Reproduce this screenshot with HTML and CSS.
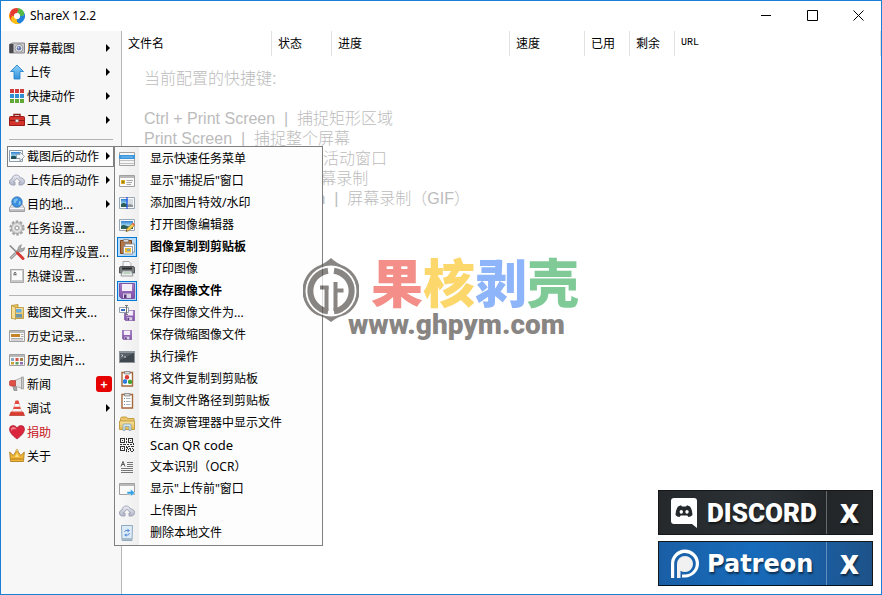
FILE: index.html
```html
<!DOCTYPE html>
<html lang="zh-CN">
<head>
<meta charset="utf-8">
<title>ShareX 12.2</title>
<link rel="stylesheet" href="styles.css">
</head>
<body>
<svg class="defs" aria-hidden="true">
  <defs>
    <linearGradient id="blueUp" x1="0" y1="0" x2="0" y2="1"><stop offset="0" stop-color="#8fd3fa"/><stop offset="1" stop-color="#2f8fdc"/></linearGradient>
    <linearGradient id="greyUp" x1="0" y1="0" x2="0" y2="1"><stop offset="0" stop-color="#f4f4f6"/><stop offset="1" stop-color="#b4b4b8"/></linearGradient>
    <linearGradient id="cloudFill" x1="0" y1="0" x2="0" y2="1"><stop offset="0" stop-color="#eceef5"/><stop offset="1" stop-color="#b0b5c8"/></linearGradient>
    <linearGradient id="sky" x1="0" y1="0" x2="0" y2="1"><stop offset="0" stop-color="#2f7fd0"/><stop offset=".6" stop-color="#a8dcf0"/><stop offset="1" stop-color="#3f7a4c"/></linearGradient>
    <linearGradient id="folderFill" x1="0" y1="0" x2="0" y2="1"><stop offset="0" stop-color="#f8e2a0"/><stop offset="1" stop-color="#e2b84e"/></linearGradient>
    <linearGradient id="lilac" x1="0" y1="0" x2="0" y2="1"><stop offset="0" stop-color="#a97bc8"/><stop offset="1" stop-color="#7d4fa6"/></linearGradient>
    <symbol id="cloud" viewBox="0 0 16 16"><path d="M3.500 13C1.500 13 .5 11.700.5 10 .5 8.300 1.500 7.200 3 7 3.200 4.500 5 3 7.200 3c2 0 3.500 1 4 2.900 2.500-.2 4.300 1.300 4.300 3.600 0 2-1.300 3.500-3.300 3.500H10V10h1.700L8 6.200 4.300 10H6v3z" fill="url(#cloudFill)" stroke="#9a9eb0" stroke-width=".9"/></symbol>
    <symbol id="photo" viewBox="0 0 16 16"><path d="M.5 2.500h15v11H.5z" fill="#f6f8fa" stroke="#9aa7b4"/><path d="M2 4h12v8H2z" fill="url(#sky)"/><path d="M2 9c3-3 5 1 12 1v2H2z" fill="#2c5f58"/></symbol>
    <symbol id="floppy" viewBox="0 0 16 16"><path d="M.5.500h15v15h-13l-2-2z" fill="url(#lilac)" stroke="#7d55a2"/><path d="M3 1h10v7H3z" fill="#f3eef8"/><path d="M4 10.500h8V15H4z" fill="#d8cfe2"/><path d="M5 11.500h2.500V15H5z" fill="#5b3780"/></symbol>
    <symbol id="clipboard" viewBox="0 0 16 16"><path d="M3 1.500h10.500v13.500H3z" fill="#fff" stroke="#a5683d" stroke-width="1.400"/><path d="M5.500.500h5.500v2.500H5.500z" fill="#d9d9d9" stroke="#777" stroke-width=".7"/></symbol>
    <symbol id="window" viewBox="0 0 16 16"><path d="M.5 2.500h15v11H.5z" fill="#fafafa" stroke="#a0a0a0"/><path d="M1 3h14v2H1z" fill="#b8b8b8"/></symbol>
  </defs>
</svg>

<div class="window">
  <header class="titlebar">
    <svg class="app-logo" viewBox="0 0 16 16" aria-hidden="true">
      <path d="M8 0A8 8 0 0 0 1 4.200C1.300 7.500 3.300 9 5 8.500 4.200 5.500 6 3 9.500 4 11 2.500 10.500.7 8 0" fill="#e63a2e"/>
      <path d="M8 0a8 8 0 0 1 7.200 4.500C15.800 8 13.500 9.300 11.400 8 11.700 5.800 10.500 4.200 8.500 3.900 9.800 2.700 9.600 1 8 0" fill="#55b947"/>
      <path d="M15.300 4.700A8 8 0 0 1 11.500 15.200C8.500 16 7 14 7.500 11.800 10 12 11.700 10.500 12 8.200 14 8.500 15.400 7 15.300 4.700" fill="#2280dc"/>
      <path d="M11.300 15.300A8 8 0 0 1 .8 4.600C.9 7 2.700 8.800 4.500 8.500 4.500 10.500 6 11.800 7.900 11.900 7.600 14 9 15.400 11.300 15.300" fill="#fbbd16"/>
      <path d="M1 4.300C0 8 1 11 3 14 1.500 10 2 8 4 8.600 2.500 8 1.400 6.500 1 4.300" fill="#e63a2e"/>
      <circle cx="8" cy="8" r="4" fill="none" stroke="#2280dc" stroke-width="1.800" stroke-dasharray="6.280 18.840"/>
      <circle cx="8" cy="8" r="4" fill="none" stroke="#fbbd16" stroke-width="1.800" stroke-dasharray="6.280 18.840" stroke-dashoffset="-6.280"/>
      <circle cx="8" cy="8" r="4" fill="none" stroke="#e63a2e" stroke-width="1.800" stroke-dasharray="6.280 18.840" stroke-dashoffset="-12.560"/>
      <circle cx="8" cy="8" r="4" fill="none" stroke="#55b947" stroke-width="1.800" stroke-dasharray="6.280 18.840" stroke-dashoffset="-18.840"/>
    </svg>
    <h1 class="title">ShareX 12.2</h1>
    <div class="window-buttons">
      <button class="window-button" aria-label="最小化"><svg viewBox="0 0 11 11"><path d="M0 5.500h10"/></svg></button>
      <button class="window-button" aria-label="最大化"><svg viewBox="0 0 11 11"><path d="M.5.500h10v10H.5z"/></svg></button>
      <button class="window-button" aria-label="关闭"><svg viewBox="0 0 11 11"><path d="M.5.500l10 10M10.500.500l-10 10"/></svg></button>
    </div>
  </header>

  <div class="body">
    <nav class="sidebar">
      <ul class="menu">
        <li><button class="item has-sub">
          <svg class="icon" viewBox="0 0 16 16"><path d="M.5 4.500L3 3h12.500v10H.5z" fill="#c9c9cd" stroke="#88888c"/><path d="M.5 4h4v9h-4z" fill="#4a4a4e"/><circle cx="10" cy="8.300" r="3.900" fill="#eee" stroke="#99999e"/><circle cx="10" cy="8.300" r="2.300" fill="#6479a8"/><circle cx="9.500" cy="7.800" r=".8" fill="#cfe0ff"/></svg>
          屏幕截图</button></li>
        <li><button class="item has-sub">
          <svg class="icon" viewBox="0 0 16 16"><path d="M8 1l6.500 6.500H11V15H5V7.500H1.500z" fill="url(#blueUp)" stroke="#2c86cc" stroke-width=".9"/></svg>
          上传</button></li>
        <li><button class="item has-sub">
          <svg class="icon" viewBox="0 0 16 16"><path d="M1 1h4v4H1zM6 1h4v4H6zM11 1h4v4h-4z" fill="#cf3b3b"/><path d="M1 6h4v4H1zM6 6h4v4H6zM11 6h4v4h-4z" fill="#2f8fd0"/><path d="M1 11h4v4H1zM6 11h4v4H6zM11 11h4v4h-4z" fill="#62a835"/></svg>
          快捷动作</button></li>
        <li><button class="item has-sub">
          <svg class="icon" viewBox="0 0 16 16"><path d="M5 5V2.500h6V5" fill="none" stroke="#8c1c18" stroke-width="1.400"/><path d="M.5 5.500Q.5 4.500 1.500 4.500h13q1 0 1 1V13.500H.5z" fill="#d4332c" stroke="#9b1b16"/><path d="M1 8.500h14" stroke="#8c1612"/><path d="M6.500 7.500h3v2.500h-3z" fill="#eee" stroke="#777" stroke-width=".5"/></svg>
          工具</button></li>
      </ul>
      <hr class="rule">
      <ul class="menu">
        <li class="open"><button class="item has-sub is-open" aria-expanded="true">
          <svg class="icon" viewBox="0 0 16 16"><path d="M.5 2.500h13v11H.5z" fill="#f6f8fa" stroke="#8e9cab"/><path d="M2 4h10v7H2z" fill="url(#sky)"/><path d="M2 8.500c3-2 5 1 10 1V11H2z" fill="#21505a"/><path d="M7.500 6.500H11V4l4.500 4.500L11 13v-2.500H7.500z" fill="#f4f7f9" stroke="#8997a5" stroke-width=".8"/></svg>
          截图后的动作</button>
          <ul class="submenu">
            <li><button class="sub-item"><span class="slot"><svg class="icon" viewBox="0 0 16 16"><path d="M.5 1.500h15v13H.5z" fill="#f6f6f6" stroke="#a2a2a2"/><path d="M0 4h16v4H0z" fill="#3a95dc"/><path d="M2 6h12" stroke="#7cc0f2"/><path d="M1 9.500h14M1 12.500h14" stroke="#c0c0c0"/></svg></span>显示快速任务菜单</button></li>
            <li><button class="sub-item"><span class="slot"><svg class="icon" viewBox="0 0 16 16"><use href="#window"/><path d="M2 7h4v4H2z" fill="#d8ad22"/><path d="M3 8.500h2v1H3z" fill="#6b5310"/><path d="M7.500 7.500H14M7.500 9.500H13M7.500 11.500H12" stroke="#a8a8a8"/></svg></span>显示"捕捉后"窗口</button></li>
            <li><button class="sub-item"><span class="slot"><svg class="icon" viewBox="0 0 16 16"><use href="#photo"/><path d="M8.500 4H14v8H8.500z" fill="#d7dce0"/><path d="M9 10c2-2 3 0 5 0v2H9z" fill="#8d9498"/><path d="M8 2v12" stroke="#1e50f0" stroke-width="1.200"/></svg></span>添加图片特效/水印</button></li>
            <li><button class="sub-item"><span class="slot"><svg class="icon" viewBox="0 0 16 16"><use href="#photo"/><path d="M7 14.500l1-3L14 6l2 2-6 5.600z" fill="#f3cf55" stroke="#947122" stroke-width=".7"/><path d="M13 7l1.200-1.200 1.800 2L15 9z" fill="#e46a5c"/><path d="M7 14.500l.5-1.500 1 1z" fill="#333"/></svg></span>打开图像编辑器</button></li>
            <li><button class="sub-item is-checked" aria-pressed="true"><span class="slot"><svg class="icon" viewBox="0 0 16 16"><path d="M1.500 1.500h11v13h-11z" fill="#b57647" stroke="#80461e"/><path d="M4.500.500h5v2.500h-5z" fill="#ddd" stroke="#777" stroke-width=".7"/><path d="M6 5h9.500v8H6z" fill="#fff" stroke="#7c8794" stroke-width=".8"/><path d="M4.500 7.500h9V15h-9z" fill="#f8f8f8" stroke="#7c8794" stroke-width=".8"/><path d="M6 9h6v4.500H6z" fill="#e7b92c"/><path d="M8 10h3v2H8z" fill="#82a4bd"/></svg></span>图像复制到剪贴板</button></li>
            <li><button class="sub-item"><span class="slot"><svg class="icon" viewBox="0 0 16 16"><path d="M4 .5h6l2 2V7H4z" fill="#f5f7f8" stroke="#999" stroke-width=".8"/><path d="M.5 7Q.5 5.500 2 5.500h12q1.500 0 1.500 1.500v5H.5z" fill="#7a7f82" stroke="#55595c"/><path d="M3 6.500h10v2H3z" fill="#2a2d2f"/><path d="M3.500 10h9l1.500 5H2z" fill="#e9edef" stroke="#888" stroke-width=".8"/><path d="M4.500 12h7" stroke="#8fb489"/></svg></span>打印图像</button></li>
            <li><button class="sub-item is-checked" aria-pressed="true"><span class="slot"><svg class="icon"><use href="#floppy"/></svg></span>保存图像文件</button></li>
            <li><button class="sub-item"><span class="slot"><svg class="icon" viewBox="0 0 16 16"><use href="#floppy" x="5" y="5" width="11" height="11"/><path d="M.5 2.500h9v5h-9z" fill="#fff" stroke="#93a0ad"/><path d="M2 4h4v2H2z" fill="#3268c0"/><path d="M6 .5h3M7.500.500v9M6 9.500h3" stroke="#777"/></svg></span>保存图像文件为...</button></li>
            <li><button class="sub-item"><span class="slot"><svg class="icon" viewBox="0 0 16 16"><use href="#floppy" x="3" y="3" width="10" height="10"/></svg></span>保存微缩图像文件</button></li>
            <li><button class="sub-item"><span class="slot"><svg class="icon" viewBox="0 0 16 16"><path d="M0 2h16v12H0z" fill="#8e959b"/><path d="M1 4h14v9H1z" fill="#3f474f"/><path d="M1 4h14L1 11z" fill="#59626a"/><path d="M2.500 5.500L4 6.500 2.500 7.500M5 8h2" stroke="#f2f2f2" fill="none" stroke-width=".8"/></svg></span>执行操作</button></li>
            <li><button class="sub-item"><span class="slot"><svg class="icon" viewBox="0 0 16 16"><use href="#clipboard"/><circle cx="8" cy="6.300" r="2.200" fill="#dc3c35"/><path d="M4 9l2-1 2 1v3l-2 1-2-1z" fill="#2d7ee0"/><path d="M9 9.500l2-1 2 1v2.800l-2 1-2-1z" fill="#40a535"/></svg></span>将文件复制到剪贴板</button></li>
            <li><button class="sub-item"><span class="slot"><svg class="icon" viewBox="0 0 16 16"><use href="#clipboard"/><path d="M7 5.500h4.500M7 8.500h4.500M7 11.500h4.500" stroke="#a6b3bb"/><path d="M5 5.500h1M5 8.500h1M5 11.500h1" stroke="#5e91ad"/></svg></span>复制文件路径到剪贴板</button></li>
            <li><button class="sub-item"><span class="slot"><svg class="icon" viewBox="0 0 16 16"><path d="M1.500 3.500l1-1.500h5l1 1.500H15v4H1.500z" fill="#eac76a" stroke="#b98f30" stroke-width=".8"/><path d="M.5 6h15v8.500H.5z" fill="url(#folderFill)" stroke="#b98f30" stroke-width=".8"/><path d="M4 15.500V10q0-1 1-1h6q1 0 1 1v5.500h-2v-4H6v4z" fill="#d5e5ef" stroke="#7a9bb0" stroke-width=".7"/></svg></span>在资源管理器中显示文件</button></li>
            <li><button class="sub-item latin"><span class="slot"><svg class="icon" viewBox="0 0 16 16" shape-rendering="crispEdges"><path d="M1.500 1.500h4v4h-4zM9.500 1.500h4v4h-4zM1.500 9.500h4v4h-4z" fill="none" stroke="#333"/><path d="M3 3h1v1H3zM11 3h1v1h-1zM3 11h1v1H3zM7 1h1v2H7zM7 4h1v2H7zM1 7h2v1H1zM4 7h3v1H4zM8 7h2v1H8zM11 7h2v1h-2zM14 6h1v2h-1zM7 9h1v2H7zM8 10h1v2H8zM9 9h2v1H9zM12 9h3v1h-3zM10 11h2v1h-2zM13 11h1v1h-1zM7 12h1v3H7zM9 12h1v1H9zM11 12h1v2h-1zM14 12h1v2h-1zM9 14h1v1H9zM12 14h2v1h-2z" fill="#333"/></svg></span>Scan QR code</button></li>
            <li><button class="sub-item"><span class="slot"><svg class="icon" viewBox="0 0 16 16"><path d="M2 7.500L4 2.500l2 5M3 5.500h2" fill="none" stroke="#555"/><path d="M8 3.500h6M8 5.500h6M8 7.500h6M2 9.500h12M2 11.500h12M2 13.500h12" stroke="#777"/></svg></span>文本识别（OCR）</button></li>
            <li><button class="sub-item"><span class="slot"><svg class="icon" viewBox="0 0 16 16"><use href="#window"/><path d="M8 10.500h3.500V8L16 11.800 11.500 15.500V13H8z" fill="#34a2e4" stroke="#fff" stroke-width=".5"/></svg></span>显示"上传前"窗口</button></li>
            <li><button class="sub-item"><span class="slot"><svg class="icon"><use href="#cloud"/></svg></span>上传图片</button></li>
            <li><button class="sub-item"><span class="slot"><svg class="icon" viewBox="0 0 16 16"><path d="M2.500.500h11l-.5 15H3z" fill="#dcebf6" stroke="#90aabf"/><path d="M3 13h10v2H3z" fill="#a8bac8"/><path d="M5.500 7Q6 4.500 9 5.500M10.500 8Q10 11 7 10" fill="none" stroke="#5a8de0"/><path d="M8.500 3.500l2.500 2.300-2.500 1.500zM7.500 8.500v3.300L5 10z" fill="#5a8de0"/></svg></span>删除本地文件</button></li>
          </ul>
        </li>
        <li><button class="item has-sub"><svg class="icon"><use href="#cloud"/></svg>上传后的动作</button></li>
        <li><button class="item has-sub">
          <svg class="icon" viewBox="0 0 16 16"><path d="M3 8h10l2.500 4v3.500H.5V12z" fill="url(#greyUp)" stroke="#8f9296" stroke-width=".8"/><path d="M1 12.500h14" stroke="#f8f8f8"/><circle cx="8" cy="6" r="5.300" fill="#3b8edb" stroke="#2868ac" stroke-width=".6"/><path d="M5 3.500l3-1.500 1 2-2 1.500-.5 2-2-1zM10 5l2 .5-.5 3-2 .5z" fill="#7cc0f0"/></svg>
          目的地...</button></li>
        <li><button class="item">
          <svg class="icon" viewBox="0 0 16 16"><circle cx="8" cy="8" r="6.400" fill="none" stroke="#a2a2a2" stroke-width="2.400" stroke-dasharray="2.500 1.520"/><circle cx="8" cy="8" r="5.600" fill="#cfcfcf" stroke="#9d9d9d" stroke-width=".7"/><circle cx="8" cy="8" r="3.500" fill="none" stroke="#eee"/><circle cx="8" cy="8" r="1.900" fill="#fafafa" stroke="#888" stroke-width=".8"/></svg>
          任务设置...</button></li>
        <li><button class="item">
          <svg class="icon" viewBox="0 0 16 16"><path d="M1.500 14.500L10 6" stroke="#838383" stroke-width="2.800"/><path d="M2 14L10 6" stroke="#c9c9c9" stroke-width="1.200"/><path d="M9 6.500Q8.500 2 12.500.700L11.500 3.500l1.500 1.300L15.500 3.500Q16 7.500 10.500 8z" fill="#aaa" stroke="#777" stroke-width=".5"/><path d="M.8 1.500L8 8.500" stroke="#898989" stroke-width="1.700"/><path d="M8.500 9l5.500 5.500" stroke="#d73a32" stroke-width="3" stroke-linecap="round"/></svg>
          应用程序设置...</button></li>
        <li><button class="item">
          <svg class="icon" viewBox="0 0 16 16"><path d="M1.500 1.500h13v13h-13z" fill="#c8c8c8" stroke="#999" stroke-width=".8"/><path d="M3 2.500h10v9.500H3z" fill="#fafafa"/><path d="M5 7.500V5l1-1 1 1v2.500M5 6.500h2" fill="none" stroke="#555" stroke-width=".8"/></svg>
          热键设置...</button></li>
      </ul>
      <hr class="rule">
      <ul class="menu">
        <li><button class="item">
          <svg class="icon" viewBox="0 0 16 16"><path d="M2.500 1.500L9 .5v13l-6.500 1z" fill="#ecc763" stroke="#b58f31" stroke-width=".8"/><path d="M5.500 3.500h9v11h-9z" fill="url(#folderFill)" stroke="#b58f31" stroke-width=".8"/><path d="M7 5h5.500v3.500H7z" fill="#67aee2"/><path d="M6.500 10H13v3.500H6.500z" fill="#6d97ad"/><path d="M2.500 1.500l4 2v12l-4-1.500z" fill="#f6df9b" stroke="#b58f31" stroke-width=".7"/></svg>
          截图文件夹...</button></li>
        <li><button class="item">
          <svg class="icon" viewBox="0 0 16 16"><use href="#window"/><path d="M2 6h9v3H2z" fill="#c58325"/><path d="M12 6.500h2.500M12 8.500h2.500M2 10.500h12M2 12h12" stroke="#999" stroke-width=".8"/></svg>
          历史记录...</button></li>
        <li><button class="item">
          <svg class="icon" viewBox="0 0 16 16"><use href="#window"/><path d="M2 6h3v3H2z" fill="#8aa8c0"/><path d="M6.500 6h3v3h-3z" fill="#d65345"/><path d="M11 6h3v3h-3z" fill="#a47b40"/><path d="M2 10h3v2.500H2z" fill="#c9a13a"/><path d="M6.500 10h3v2.500h-3z" fill="#5d9a5e"/><path d="M11 10h3v2.500h-3z" fill="#8f6bb1"/></svg>
          历史图片...</button></li>
        <li><button class="item">
          <svg class="icon" viewBox="0 0 16 16"><path d="M3.500 9h3.500l1 5.500H5z" fill="#a6a6a6" stroke="#777" stroke-width=".6"/><path d="M6 4.500L13 1.500v11L6 10z" fill="#e4e4e4" stroke="#999" stroke-width=".7"/><path d="M.5 5.500L1.500 4.500H6.500V10h-5L.5 9z" fill="#df5047" stroke="#b5302a" stroke-width=".6"/><path d="M12.500 1h2v12h-2z" fill="#c9c9c9" stroke="#8c8c8c" stroke-width=".6"/></svg>
          新闻<span class="badge">+</span></button></li>
        <li><button class="item has-sub">
          <svg class="icon" viewBox="0 0 16 16"><path d="M.5 15.500L2 12h12l1.500 3.500z" fill="#dc3a2e" stroke="#a9241b" stroke-width=".6"/><path d="M6.500.500h3L13 13H3z" fill="#e14a3e"/><path d="M5.700 4h4.600l.7 2.700H5z" fill="#fafafa"/><path d="M4.300 9h7.400l.7 2.500H3.600z" fill="#f2f2f2"/></svg>
          调试</button></li>
        <li><button class="item donate">
          <svg class="icon" viewBox="0 0 16 16"><path d="M8 15Q.5 9.500.5 5.300.5 1.500 4.200 1.500 6.800 1.500 8 4q1.200-2.500 3.800-2.500 3.700 0 3.700 3.800Q15.500 9.500 8 15" fill="#d9263d" stroke="#a91a2d" stroke-width=".7"/><path d="M2 5.500Q2 3 4.500 3 6.500 3 7.500 5.500 4 4 2 7z" fill="#f28692"/></svg>
          捐助</button></li>
        <li><button class="item">
          <svg class="icon" viewBox="0 0 16 16"><path d="M1.500 13.500L.7 4l3.600 3.500L8 2l3.700 5.500L15.300 4l-.8 9.500z" fill="#efb638" stroke="#a97617" stroke-width=".8"/><path d="M2 11h12" stroke="#b77c19"/><path d="M8 5l2 4H6z" fill="#fae188"/><circle cx="8" cy="2.500" r="1.200" fill="#f9d876" stroke="#a97617" stroke-width=".4"/></svg>
          关于</button></li>
      </ul>
    </nav>

    <main class="content">
      <table class="list">
        <colgroup><col class="c-name"><col class="c-state"><col class="c-progress"><col class="c-speed"><col class="c-time"><col class="c-time"><col></colgroup>
        <thead><tr><th>文件名</th><th>状态</th><th>进度</th><th>速度</th><th>已用</th><th>剩余</th><th class="url">URL</th></tr></thead>
      </table>
      <div class="tips">
        <p>当前配置的快捷键:</p>
        <ul class="keys">
          <li>Ctrl + Print Screen  |  捕捉矩形区域</li>
          <li>Print Screen  |  捕捉整个屏幕</li>
          <li>Alt + Print Screen  |  捕捉活动窗口</li>
          <li>Shift + Print Screen  |  屏幕录制</li>
          <li>Ctrl + Shift + Print Screen  |  屏幕录制（GIF）</li>
        </ul>
      </div>
    </main>
  </div>

  <div class="watermark">
    <svg class="seal" viewBox="0 0 56 66" aria-hidden="true">
      <path d="M28 1Q33 6 42 9.500A27.500 27.500 0 0 1 42 58Q34 60 28 65 22 60 14 58A27.500 27.500 0 0 1 14 9.500Q23 6 28 1z" fill="#57524f"/>
      <circle cx="28" cy="34" r="25.500" fill="#fff"/>
      <g fill="none" stroke="#57524f">
        <path d="M25 13.700A20.500 20.500 0 0 0 25 54.300M31 13.700A20.500 20.500 0 0 1 31 54.300" stroke-width="6"/>
        <path d="M17 30.500h8.500" stroke-width="4"/>
        <path d="M23.500 29v25M32.500 25v29" stroke-width="4"/>
        <path d="M34 33.500h6.500" stroke-width="4"/>
      </g>
    </svg>
    <div class="mark-text">
      <div class="mark-name"><span class="red">果</span><span class="yellow">核</span><span class="blue">剥</span><span class="green">壳</span></div>
      <div class="mark-url">www.ghpym.com</div>
    </div>
  </div>

  <aside class="promos">
    <div class="promo discord">
      <a class="promo-link" href="#">
        <svg class="promo-icon" viewBox="0 0 30 32" aria-hidden="true"><path d="M4 1h20q3 0 3 3v27l-5-4H4q-3 0-3-3V4q0-3 3-3z" fill="#fff"/><path d="M8 9.500l3-1.200 1 1.200h4l1-1.200 3 1.200q2.500 3.500 2.500 8.500-2 2-4 2l-1.200-1.500h-6.600L9.500 20q-2.500 0-4-2Q5.500 13 8 9.500z" fill="#25292c"/><ellipse cx="11.300" cy="14.800" rx="1.700" ry="1.900" fill="#fff"/><ellipse cx="17" cy="14.800" rx="1.700" ry="1.900" fill="#fff"/></svg>
        <span class="discord-name">DISCORD</span></a>
      <button class="promo-close">X</button>
    </div>
    <div class="promo patreon">
      <a class="promo-link" href="#">
        <svg class="promo-icon" viewBox="0 0 30 32" aria-hidden="true"><path d="M1 30V16A14 14 0 1 1 15 29.500H12V26.500H15A10.800 10.800 0 1 0 4.200 16V30z" fill="#fff"/><path d="M7 30V16a8 8 0 1 1 8 8q-2.600 0-4.500-1.300V30z" fill="#f1f1f1"/></svg>
        <span class="patreon-name">Patreon</span></a>
      <button class="promo-close">X</button>
    </div>
  </aside>
</div>
</body>
</html>
```
FILE: styles.css
```css
* { box-sizing: border-box; }

body {
  margin: 0;
  background: #fff;
  color: #000;
  font: 12px/20px "Noto Sans", "Noto Sans CJK SC", sans-serif;
}

ul { list-style: none; margin: 0; padding: 0; }
p { margin: 0; }
button { font: inherit; color: inherit; background: none; border: 0; padding: 0; }
.defs { position: absolute; width: 0; height: 0; }

.window {
  position: relative;
  display: flex;
  flex-direction: column;
  min-height: 100vh;
  border: 1px solid #1a80d4;
}

/* Title bar */
.titlebar { display: flex; align-items: center; height: 30px; padding-left: 8px; }
.app-logo { width: 16px; height: 16px; }
.title { flex: 1; margin: 0 0 0 5px; font-size: 12px; font-weight: 400; }
.window-buttons { display: flex; align-self: stretch; }
.window-button { width: 46px; padding-bottom: 2px; display: flex; align-items: center; justify-content: center; }
.window-button svg { width: 11px; height: 11px; fill: none; stroke: #000; }

.body { flex: 1; display: flex; }

/* Side menu */
.sidebar {
  flex: none;
  width: 121px;
  padding: 5px 7px 5px 6px;
  background: #f7f7f7;
  border-right: 1px solid #b8b8b8;
}
.icon { flex: none; width: 16px; height: 16px; }
.menu > li { position: relative; padding: 2px 0 1px; }
.item {
  display: flex;
  align-items: center;
  gap: 2px;
  width: 100%;
  height: 21px;
  padding: 0 3px 2px 1px;
  border: 1px solid transparent;
  font-family: "Noto Sans CJK SC", sans-serif;
  white-space: nowrap;
}
.has-sub::after {
  content: "";
  margin-left: auto;
  border: 4px solid transparent;
  border-left-color: #000;
  border-right-width: 0;
}
.is-open { background: #fdfdfd; border-color: #808080; }
.donate { color: #c8141e; }
.badge {
  width: 16px;
  margin: 0 -2px 0 auto;
  border-radius: 3px;
  background: #e60000;
  color: #fff;
  font-weight: 700;
  line-height: 16px;
  text-align: center;
}
.rule { height: 12px; margin: 0 1px 0 2px; border: 0; background: linear-gradient(#b4b4b4, #b4b4b4) 0 7px / 100% 1px no-repeat; }

/* Drop-out menu */
.submenu {
  position: absolute;
  z-index: 1;
  top: 2px;
  left: 100%;
  width: 209px;
  padding: 1px 0;
  border: 1px solid #808080;
  background: linear-gradient(90deg, #f9f9f9, #efefef) 0 0 / 24px 100% no-repeat #fdfdfd;
}
.sub-item {
  display: flex;
  align-items: center;
  gap: 13px;
  width: 100%;
  height: 22px;
  padding-left: 2px;
  font-family: "Noto Sans", "Noto Sans CJK SC", sans-serif;
  white-space: nowrap;
}
.latin { font-size: 13px; }
.slot { display: flex; padding: 1px; border: 1px solid transparent; }
.is-checked { font-weight: 700; }
.is-checked .slot { border-color: #0078d7; background: #b8daf5; }

/* Task list */
.content { flex: 1; min-width: 0; }
.list { width: 100%; border-spacing: 0; table-layout: fixed; font-family: "Noto Sans CJK SC", sans-serif; }
.list th { height: 25px; padding: 0 0 1px 6px; border-right: 1px solid #e2e2e2; font-weight: 400; text-align: left; line-height: 20px; }
.list .url { font-family: "Liberation Mono", monospace; font-size: 10px; }
.c-name { width: 150px; }
.c-state { width: 60px; }
.c-progress { width: 178px; }
.c-speed { width: 75px; }
.c-time { width: 45px; }

.tips {
  padding: 13px 22px;
  color: #bcbcbc;
  font: 300 16px/20px "Liberation Sans", "Noto Sans CJK SC", sans-serif;
}
.keys { margin-top: 20px; }
.keys li { height: 20px; white-space: pre; }

/* Floating brand mark */
.watermark {
  position: absolute;
  z-index: 2;
  top: 250px;
  left: 302px;
  display: flex;
  opacity: .7;
  pointer-events: none;
}
.seal { width: 56px; height: 66px; margin-top: 6px; }
.mark-text { margin-left: -11px; }
.mark-name {
  margin-left: 23px;
  font: 900 52px/60px "Noto Sans CJK SC", sans-serif;
}
.red { color: #ee5f58; }
.yellow { color: #fbc72f; }
.blue { color: #5f97f8; }
.green { color: #4bb56d; }
.mark-url { font: 900 28px/28px Roboto, sans-serif; color: #57524f; }

/* Promo banners */
.promos { position: absolute; right: 8px; bottom: 8px; display: grid; gap: 6px; width: 215px; }
.promo { display: flex; height: 45px; border: 1px solid #15181a; color: #fff; }
.discord { background: linear-gradient(90deg, #25292c, #2c3135 50%, #222629 78%, #25292c); }
.patreon { background: linear-gradient(90deg, #1a5fa6, #176bbb 45%, #1b5c9e 78%, #1d5288); border-bottom-color: #04101c; }
.promo-link { flex: 1; display: flex; align-items: center; gap: 7px; padding-left: 11px; color: #fff; text-decoration: none; text-shadow: 1px 2px 2px #0008; }
.promo-icon { width: 30px; height: 32px; }
.discord-name { font: 900 26px/32px Roboto, sans-serif; }
.patreon-name { font: 700 24px/32px "DejaVu Sans", sans-serif; }
.promo-close { width: 46px; border-left: 1px solid #ffffff50; font: 800 26px/32px "Open Sans", sans-serif; text-shadow: 1px 2px 2px #0008; }
```
